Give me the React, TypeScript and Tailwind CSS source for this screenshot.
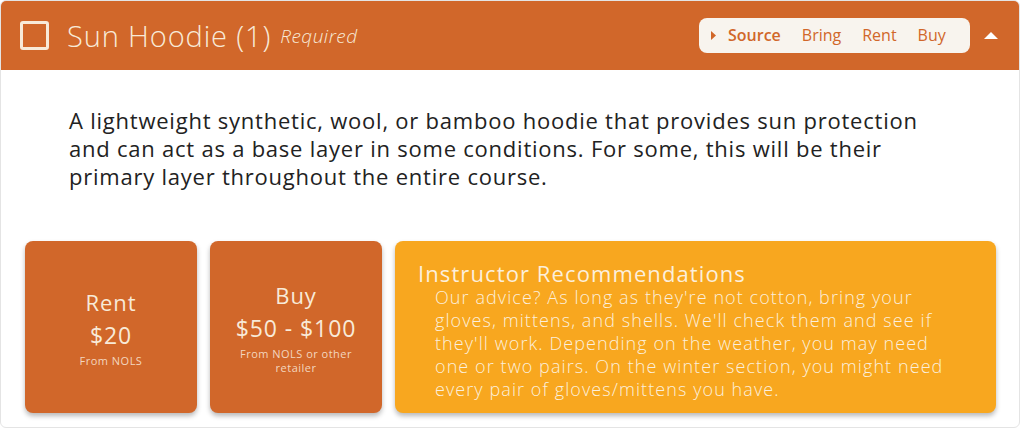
import { useState } from 'react'

const TABS = ['Source', 'Bring', 'Rent', 'Buy']

function PriceCard({ label, price, note }: { label: string; price: string; note: string }) {
  return (
    <div className="w-[172px] shrink-0 rounded-lg bg-[#d1672a] shadow-[0_3px_5px_rgba(0,0,0,0.28)] flex flex-col items-center justify-center text-center text-[#f8ead8] px-7">
      <div className="text-[22px] leading-[32px] tracking-[0.04em]">{label}</div>
      <div className="text-[23px] leading-[34px] tracking-[0.04em] whitespace-nowrap">{price}</div>
      <div className="text-[11px] leading-[14px] mt-[2px] text-[#f3d6bf]">{note}</div>
    </div>
  )
}

export default function App() {
  const [tab, setTab] = useState('Source')
  const [checked, setChecked] = useState(false)

  return (
    <div
      className="w-[1021px] h-[429px] bg-white tracking-[0.03em]"
      style={{ fontFamily: '"Open Sans", Lato, sans-serif' }}
    >
      <div className="h-[428px] w-[1020px] rounded-md border border-[#e4e4e4] flex flex-col overflow-hidden">
        {/* header */}
        <div className="h-[70px] shrink-0 bg-[#d1672a] flex items-center pl-[20px] pr-[22px] -mx-px -mt-px">
          <button
            onClick={() => setChecked(!checked)}
            className="w-[29px] h-[29px] rounded-[3px] border-[3px] border-[#f8ead8] shrink-0"
          />
          <h2 className="ml-[18px] text-[29px] font-light text-[#f8ead8] leading-none tracking-[0.03em]">Sun Hoodie (1)</h2>
          <span className="ml-[9px] text-[19px] italic font-light text-[#f8ead8] leading-none mt-[2px]">Required</span>

          <div className="ml-auto h-[35px] w-[271px] rounded-lg bg-[#f8f4ee] flex items-center pl-[12px] text-[16px] text-[#d1672a] tracking-normal">
            <svg width="6" height="9" viewBox="0 0 6 9" className="mr-[11px]">
              <path d="M0 0 L5 4.5 L0 9 Z" fill="#d1672a" />
            </svg>
            {TABS.map(t => (
              <button
                key={t}
                onClick={() => setTab(t)}
                className={`mr-[21px] ${tab === t ? 'font-semibold' : 'font-normal'}`}
              >
                {t}
              </button>
            ))}
          </div>
          <svg width="14" height="7" viewBox="0 0 14 7" className="ml-[14px]">
            <path d="M0 7 L7 0 L14 7 Z" fill="#ffffff" />
          </svg>
        </div>

        {/* body */}
        <div className="flex-1 flex flex-col">
          <p className="pl-[68px] pr-[80px] pt-[36px] text-[22px] leading-[28px] text-[#222] font-normal tracking-[0.035em]">
            A lightweight synthetic, wool, or bamboo hoodie that provides sun protection and can act as a base layer in some conditions. For some, this will be their primary layer throughout the entire course.
          </p>

          <div className="mt-auto mb-[14px] h-[172px] flex gap-[13px] pl-[24px] pr-[23px]">
            <PriceCard label="Rent" price="$20" note="From NOLS" />
            <PriceCard label="Buy" price="$50 - $100" note="From NOLS or other retailer" />

            <div className="flex-1 rounded-lg bg-[#f8a71f] shadow-[0_3px_5px_rgba(0,0,0,0.28)] pl-[23px] pr-[46px] pt-[19px] text-[#fcefdc]">
              <h3 className="text-[22px] leading-[26px] font-normal tracking-[0.05em]">Instructor Recommendations</h3>
              <p className="pl-[17px] text-[18px] leading-[23px] font-light tracking-[0.06em]">
                Our advice? As long as they're not cotton, bring your gloves, mittens, and shells. We'll check them and see if they'll work. Depending on the weather, you may need one or two pairs. On the winter section, you might need every pair of gloves/mittens you have.
              </p>
            </div>
          </div>
        </div>
      </div>
    </div>
  )
}
